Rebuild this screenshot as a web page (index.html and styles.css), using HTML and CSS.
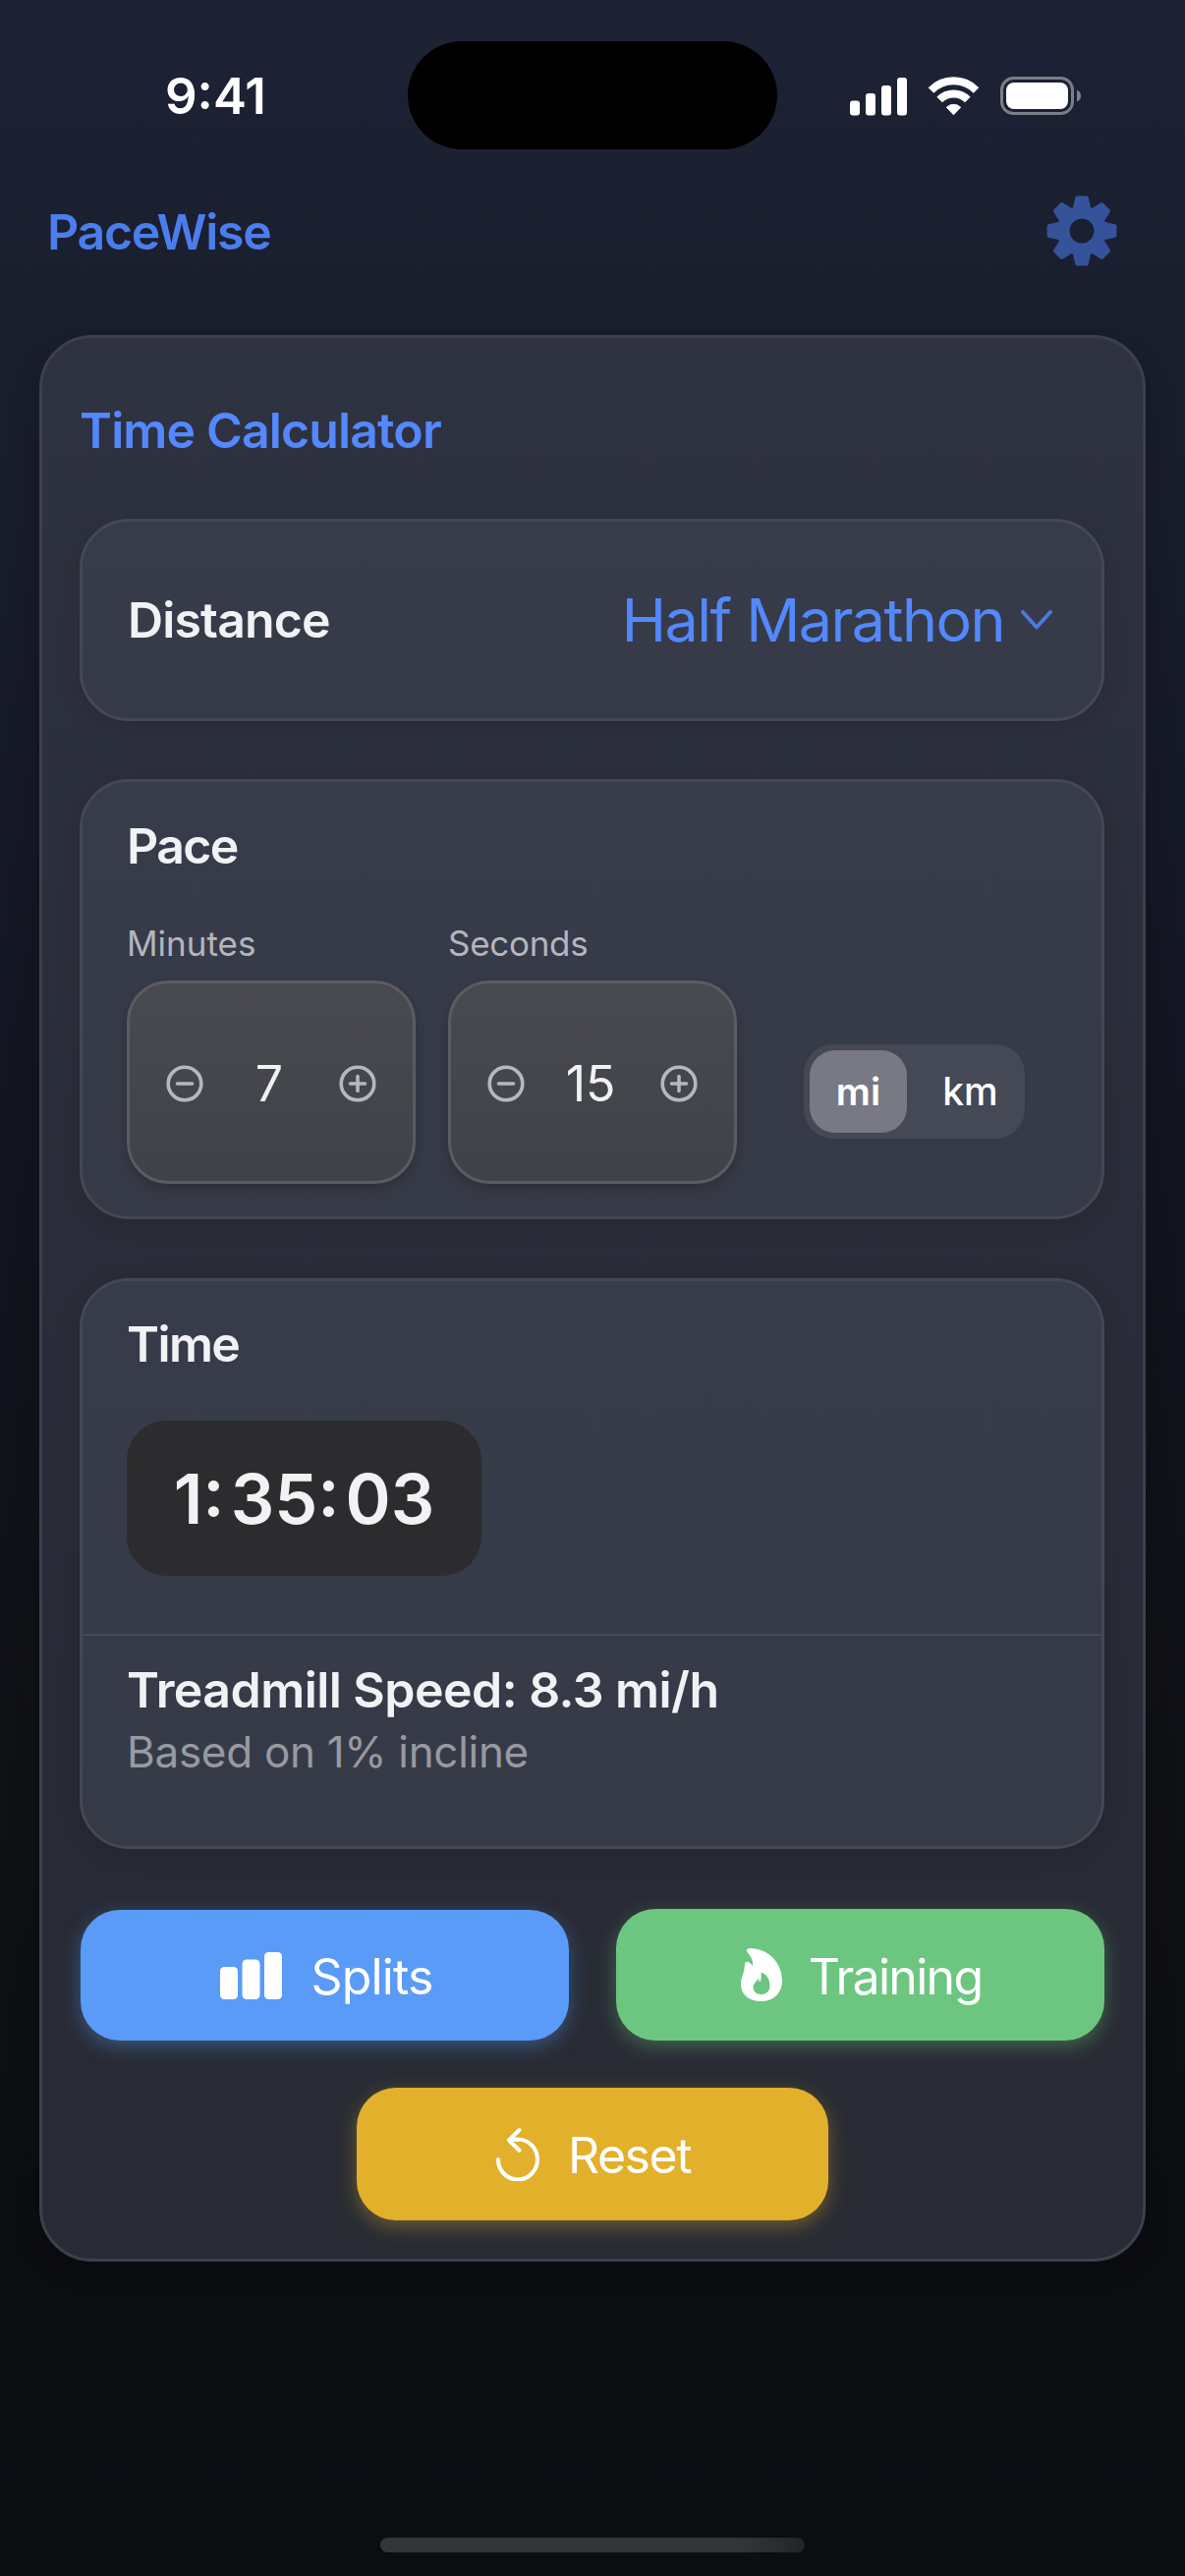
FILE: index.html
```html
<!DOCTYPE html>
<html lang="en">
<head>
<meta charset="utf-8">
<title>PaceWise</title>
<link rel="stylesheet" href="styles.css">
</head>
<body>
<div class="screen">
  <div class="status">
    <span class="clock">9:41</span>
    <span class="island"></span>
    <svg class="status-icons" width="236" height="40" viewBox="0 0 236 40" fill="#fff">
      <rect x="0" y="24.5" width="10" height="15" rx="3"/>
      <rect x="16" y="17" width="10" height="22.5" rx="3"/>
      <rect x="32" y="9" width="10" height="30.5" rx="3"/>
      <rect x="48" y="1" width="10" height="38.5" rx="3"/>
      <g fill="none" stroke="#fff" stroke-width="7.8">
        <path d="M82.5 14 A32 32 0 0 1 128.5 14"/>
        <path d="M91.2 23.5 A20 20 0 0 1 119.8 23.5"/>
      </g>
      <path d="M105.5 38.8 L98.3 31.2 A10.5 10.5 0 0 1 112.7 31.2 Z" stroke="#fff" stroke-width="1" stroke-linejoin="round"/>
      <rect x="154.5" y="1.5" width="72" height="36" rx="12" fill="none" stroke="#fff" stroke-opacity=".42" stroke-width="3"/>
      <rect x="159" y="6" width="63" height="27" rx="8"/>
      <path d="M231 13.5 Q235 15.5 235 19.5 Q235 23.5 231 25.5 Z" fill-opacity=".45"/>
    </svg>
  </div>

  <header class="header">
    <h1 class="brand">PaceWise</h1>
    <svg class="gear" width="72" height="72" viewBox="-36 -36 72 72">
      <defs><path id="tooth" d="M-7.5 -20 L-4.6 -33.2 L4.6 -33.2 L7.5 -20 Z"/></defs>
      <g fill="#35539a" stroke="#35539a" stroke-width="4.5" stroke-linejoin="round">
        <use href="#tooth"/><use href="#tooth" transform="rotate(45)"/><use href="#tooth" transform="rotate(90)"/><use href="#tooth" transform="rotate(135)"/>
        <use href="#tooth" transform="rotate(180)"/><use href="#tooth" transform="rotate(225)"/><use href="#tooth" transform="rotate(270)"/><use href="#tooth" transform="rotate(315)"/>
      </g>
      <circle r="18.8" fill="none" stroke="#35539a" stroke-width="13"/>
      <circle r="12.3" fill="#1b2030"/>
    </svg>
  </header>

  <main class="panel">
    <h2 class="panel-title">Time Calculator</h2>

    <section class="card distance">
      <span class="label">Distance</span>
      <span class="picker"><span class="picker-value">Half Marathon</span>
        <svg width="32" height="20" viewBox="0 0 32 20"><path d="M2 2 L16 17.5 L30 2" fill="none" stroke="#4d79e0" stroke-width="3.8" stroke-linecap="round" stroke-linejoin="round"/></svg>
      </span>
    </section>

    <section class="card pace">
      <h3 class="label short">Pace</h3>
      <div class="pace-row">
        <div class="field">
          <span class="field-name">Minutes</span>
          <div class="stepper">
            <svg width="38" height="38" viewBox="0 0 38 38"><circle cx="19" cy="19" r="16.8"/><path d="M11.5 19 H26.5"/></svg>
            <span class="num">7</span>
            <svg width="38" height="38" viewBox="0 0 38 38"><circle cx="19" cy="19" r="16.8"/><path d="M11.5 19 H26.5 M19 11.5 V26.5"/></svg>
          </div>
        </div>
        <div class="field">
          <span class="field-name seconds">Seconds</span>
          <div class="stepper">
            <svg width="38" height="38" viewBox="0 0 38 38"><circle cx="19" cy="19" r="16.8"/><path d="M11.5 19 H26.5"/></svg>
            <span class="num">15</span>
            <svg width="38" height="38" viewBox="0 0 38 38"><circle cx="19" cy="19" r="16.8"/><path d="M11.5 19 H26.5 M19 11.5 V26.5"/></svg>
          </div>
        </div>
        <div class="segment">
          <span class="unit selected">mi</span>
          <span class="unit">km</span>
        </div>
      </div>
    </section>

    <section class="card time">
      <div class="time-main">
        <h3 class="label short">Time</h3>
        <div class="result"><span>1<i class="colon">:</i>35<i class="colon">:</i>03</span></div>
      </div>
      <div class="treadmill">
        <p class="speed">Treadmill Speed: 8.3 mi/h</p>
        <p class="note">Based on 1% incline</p>
      </div>
    </section>

    <div class="actions">
      <div class="button splits">
        <svg width="63" height="48" viewBox="0 0 63 48" fill="#fff"><rect x="0" y="15" width="18" height="33" rx="4.5"/><rect x="22.5" y="7.5" width="18" height="40.5" rx="4.5"/><rect x="45" y="0" width="18" height="48" rx="4.5"/></svg>
        <span class="text">Splits</span>
      </div>
      <div class="button training">
        <svg width="42" height="54" viewBox="0 0 42 54"><path fill="#fff" fill-rule="evenodd" d="M9 0 C28 0 42 15 42 33 C42 46 33 54 20.5 54 C8 54 0 47 0 36.500 C0 29.500 3.500 26 4 16.500 C4.200 13 7 13.500 9 15 C10.500 16 11.500 17 12 18.500 C13 12 9.500 7.500 6.500 4 C5 2 6.500 0 9 0 Z M21 25 C20.500 25 20.300 25.500 20.500 26.500 C21 29.500 20.500 32 19.500 34.500 C18.500 33.500 18.200 32 18 30.500 C15.500 34.500 12.500 36 12.500 39.500 C12.500 44 15.500 47 21 47 C26.500 47 29.500 43.500 29.500 38 C29.500 31.500 26 26 21 25 Z"/></svg>
        <span class="text">Training</span>
      </div>
    </div>
    <div class="actions">
      <div class="button reset">
        <svg width="44" height="54" viewBox="0 0 44 54" fill="none" stroke="#fff" stroke-width="4" stroke-linecap="round" stroke-linejoin="round"><path d="M2 32 A20 20.5 0 1 0 22 11.500 L14 11.800"/><path d="M23.500 2 L13 12.500 L23.500 22.800"/></svg>
        <span class="text">Reset</span>
      </div>
    </div>
  </main>
  <span class="home"></span>
</div>
</body>
</html>
```
FILE: styles.css
```css
* { box-sizing: border-box; }
body { margin: 0; font-family: Inter, "Liberation Sans", sans-serif; color: #f1f2f4; }
h1, h2, h3, p { margin: 0; }
i { font-style: normal; }
svg { display: block; flex: none; }

.screen {
  width: 1206px;
  height: 2622px;
  display: flex;
  flex-direction: column;
  background: linear-gradient(#1d2335 0, #1a1f2e 300px, #161928 750px, #12141f 1240px, #101115 1800px, #0c0d11 2300px, #0a0e11 2622px);
}
.status { display: grid; grid-template-columns: 415px 376px 1fr; align-items: center; height: 195px; }
.clock { padding-left: 168px; font-size: 51px; line-height: 60px; font-weight: 600; color: #fff; }
.island { height: 110px; margin-bottom: 1px; border-radius: 55px; background: #000; }
.status-icons { margin-left: 74px; }

.header { display: flex; justify-content: space-between; align-items: center; height: 79px; margin-bottom: 67px; padding: 0 69px 0 48px; }
.brand { padding-top: 3px; font-size: 50px; line-height: 60px; font-weight: 600; letter-spacing: -1.3px; color: #4b7ded; }

.panel {
  width: 1126px;
  height: 1961px;
  margin-left: 40px;
  padding: 64px 39px 0 38px;
  border: 3px solid #3d404c;
  border-radius: 54px;
  background: linear-gradient(#2f3240, #2b2e3b 30%, #282b36 75%, #282b33);
  box-shadow: 0 6px 30px rgba(0, 0, 0, .2);
}
.panel-title { margin-bottom: 60px; font-size: 50px; line-height: 60px; font-weight: 600; letter-spacing: -.87px; color: #5388ff; }
.card { border: 3px solid #434854; border-radius: 50px; background: linear-gradient(#373c4a, #363a47); box-shadow: 0 4px 24px rgba(0, 0, 0, .12); }
.label { font-size: 50px; line-height: 60px; font-weight: 600; letter-spacing: -.85px; }
.short { letter-spacing: -1.6px; }

.distance { display: flex; align-items: center; justify-content: space-between; height: 206px; margin-bottom: 59px; padding: 0 50px 0 46px; }
.picker { display: flex; align-items: center; gap: 17px; }
.picker-value { font-size: 61px; line-height: 74px; letter-spacing: -1.55px; color: #5388ff; }

.pace { height: 448px; margin-bottom: 60px; padding: 35px 45px 0; }
.pace-row { display: flex; align-items: flex-end; gap: 33px; margin-top: 48px; }
.field { width: 294px; }
.field-name { display: inline-block; margin-bottom: 17px; font-size: 35px; line-height: 42px; color: #b3b6bd; vertical-align: top; }
.seconds { letter-spacing: -.3px; }
.stepper {
  display: flex;
  align-items: center;
  justify-content: space-between;
  height: 207px;
  padding: 2px 37px 0;
  border: 3px solid #5a5c61;
  border-radius: 42px;
  background: linear-gradient(#494a50, #404249);
  box-shadow: 0 4px 12px rgba(0, 0, 0, .2);
}
.stepper svg { fill: none; stroke: #b5b8bd; stroke-width: 3.6px; stroke-linecap: round; }
.num { margin-right: 4px; font-size: 50px; line-height: 60px; }
.segment { display: flex; width: 225px; height: 96px; margin: 0 0 46px 35px; padding: 6px; border-radius: 30px; background: #454855; }
.unit { display: flex; align-items: center; justify-content: center; flex: 1; padding-left: 15px; font-size: 39px; line-height: 48px; font-weight: 500; color: #fff; }
.selected { flex: 0 0 99px; padding-left: 0; border-radius: 26px; background: #787984; font-weight: 600; }

.time { height: 581px; margin-bottom: 61px; }
.time-main { height: 361px; padding: 34px 45px 0; border-bottom: 2px solid #484b57; }
.result { display: flex; align-items: center; justify-content: center; width: 361px; height: 158px; margin-top: 48px; padding-top: 2px; border-radius: 40px; background: #2c2c2e; font-size: 70px; line-height: 84px; font-weight: 600; }
.colon { margin-right: 6px; }
.treadmill { padding: 25px 45px 0; }
.speed { font-size: 50px; line-height: 60px; font-weight: 600; letter-spacing: -.54px; }
.note { margin-top: 6px; font-size: 44px; line-height: 54px; letter-spacing: -.3px; color: #969aa1; }

.actions { display: flex; justify-content: center; align-items: flex-end; gap: 48px; margin-bottom: 48px; }
.button { display: flex; align-items: center; justify-content: center; width: 497px; height: 134px; gap: 29px; border-radius: 40px; font-size: 50px; line-height: 60px; color: #fff; }
.text { padding-top: 3px; }
.splits { height: 133px; padding-left: 5px; letter-spacing: -.85px; background: #5a9bf8; box-shadow: 0 6px 20px rgba(90, 155, 248, .38); }
.training { gap: 27px; padding-left: 3px; letter-spacing: -1.7px; background: #6cc67f; box-shadow: 0 6px 20px rgba(108, 198, 127, .38); }
.reset { width: 480px; height: 135px; padding-left: 3px; letter-spacing: -1.5px; background: #e2b02a; box-shadow: 0 6px 20px rgba(226, 176, 42, .38); }

.home { width: 432px; height: 15px; margin: 281px auto 0; border-radius: 8px; background: linear-gradient(90deg, #343537 85%, #232427); }
```
